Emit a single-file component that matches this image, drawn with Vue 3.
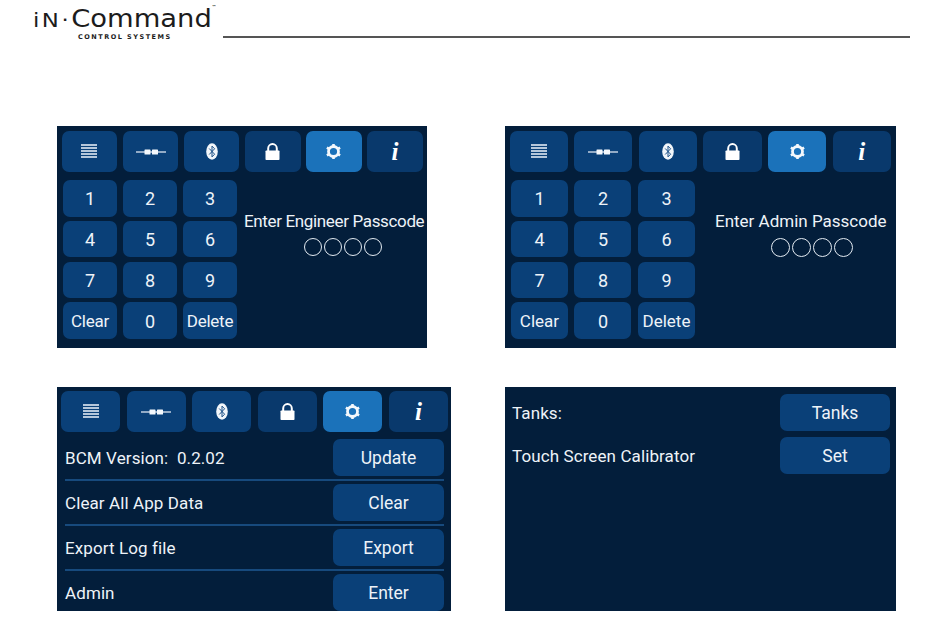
<template>
  <div class="page">
    <header class="top">
      <div class="logo">
        <div class="logo-name"><span class="logo-in">iN·</span>Command<sup class="tm">™</sup></div>
        <div class="logo-sub">CONTROL SYSTEMS</div>
      </div>
      <div class="top-line"></div>
    </header>

    <main class="sheet">
      <section v-for="p in panels" :key="p.id" class="panel" :class="p.id">
        <div v-if="p.tabs" class="tabs">
          <div v-for="t in tabs" :key="t" class="tab" :class="{ active: t === 'gear', dim: t === 'lock' || t === 'info' }">
            <svg v-if="t === 'list'" width="16" height="15" viewBox="0 0 16 15">
              <path d="M0 1h16M0 4h16M0 7h16M0 10h16M0 13h16" stroke="#eef4fa" stroke-width="1.4" fill="none" />
            </svg>
            <svg v-if="t === 'link'" width="30" height="8" viewBox="0 0 30 8">
              <path d="M0 4h30" stroke="#eef4fa" stroke-width="1.2" />
              <rect x="8.5" y="1.5" width="6" height="5" rx="0.6" fill="#f4f8fc" />
              <rect x="16" y="1.5" width="6" height="5" rx="0.6" fill="#f4f8fc" />
            </svg>
            <svg v-if="t === 'bt'" width="12" height="17" viewBox="0 0 12 17">
              <ellipse cx="6" cy="8.5" rx="5.8" ry="8.3" fill="#f2f6fa" />
              <path d="M3.2 5.5l5.4 5.7-2.6 2.7V3.1l2.6 2.7-5.4 5.7" stroke="#1a4f86" stroke-width="1" fill="none" />
            </svg>
            <svg v-if="t === 'lock'" width="15" height="17" viewBox="0 0 15 17">
              <path d="M3.2 8V5.4a4.3 4.3 0 0 1 8.6 0V8" stroke="#fff" stroke-width="2" fill="none" />
              <rect x="0.5" y="7.5" width="14" height="9.5" rx="0.8" fill="#fff" />
            </svg>
            <svg v-if="t === 'gear'" width="17" height="17" viewBox="0 0 17 17">
              <circle cx="8.5" cy="8.5" r="5" stroke="#f4f8fc" stroke-width="2.8" fill="none" />
              <path d="M8.5 0.9v2M8.5 14.1v2M1.9 4.7l1.8 1M13.3 11.3l1.8 1M1.9 12.3l1.8-1M13.3 5.7l1.8-1" stroke="#f4f8fc" stroke-width="2.6" />
            </svg>
            <span v-if="t === 'info'" class="info">i</span>
          </div>
        </div>

        <div v-if="p.title" class="entry">
          <div class="keys">
            <div v-for="k in keys" :key="k" class="btn" :class="{ word: k.length > 1 }">{{ k }}</div>
          </div>
          <div class="msg">
            <div class="msg-title">{{ p.title }}</div>
            <div class="dots">
              <span v-for="n in 4" :key="n" class="dot"></span>
            </div>
          </div>
        </div>

        <div v-if="p.rows" class="rows">
          <div v-for="r in p.rows" :key="r.label" class="row">
            <span class="label">{{ r.label }}</span>
            <div class="btn">{{ r.action }}</div>
          </div>
        </div>
      </section>
    </main>
  </div>
</template>

<script setup>
const tabs = ['list', 'link', 'bt', 'lock', 'gear', 'info']
const keys = ['1', '2', '3', '4', '5', '6', '7', '8', '9', 'Clear', '0', 'Delete']

const panels = [
  { id: 'engineer', tabs: true, title: 'Enter Engineer Passcode' },
  { id: 'admin', tabs: true, title: 'Enter Admin Passcode' },
  {
    id: 'system',
    tabs: true,
    rows: [
      { label: 'BCM Version:\u00a0\u00a00.2.02', action: 'Update' },
      { label: 'Clear All App Data', action: 'Clear' },
      { label: 'Export Log file', action: 'Export' },
      { label: 'Admin', action: 'Enter' },
    ],
  },
  {
    id: 'tanks',
    rows: [
      { label: 'Tanks:', action: 'Tanks' },
      { label: 'Touch Screen Calibrator', action: 'Set' },
    ],
  },
]
</script>

<style>
html,
body {
  background: #fff;
}
</style>

<style scoped>
.page {
  width: 950px;
  height: 640px;
  overflow: hidden;
  font-family: Roboto, "Liberation Sans", sans-serif;
}

.top {
  display: flex;
  align-items: flex-start;
  height: 126px;
  padding-left: 33px;
  box-sizing: border-box;
}

.logo {
  width: 190px;
  padding-top: 6px;
  color: #1c1c1c;
}

.logo-name {
  font-family: "DejaVu Sans", sans-serif;
  font-size: 24px;
  line-height: 27px;
  white-space: nowrap;
  transform: scaleX(1.14);
  transform-origin: left;
}

.logo-in {
  font-size: 20px;
  letter-spacing: 2.2px;
}

.tm {
  font-size: 4px;
  line-height: 0;
  vertical-align: 19px;
  font-weight: 700;
}

.logo-sub {
  margin: 0 0 0 45px;
  font-family: "DejaVu Sans", sans-serif;
  font-weight: 700;
  font-size: 6.5px;
  line-height: 7px;
  letter-spacing: 1.5px;
  white-space: nowrap;
}

.top-line {
  width: 687px;
  height: 2px;
  margin: 36px 0 0 0;
  background: #555;
}

.sheet {
  display: grid;
  grid-template-columns: 448px 391px;
  grid-template-rows: 222px 224px;
  row-gap: 39px;
  padding-left: 57px;
}

.panel {
  background: #031e3b;
  color: #eef3f8;
  overflow: hidden;
  box-sizing: border-box;
}

.engineer {
  width: 370px;
  padding: 5px 4.2px 0 4.6px;
}

.admin {
  padding: 5px 5.2px 0 4.6px;
}

.system {
  width: 394px;
  padding: 4px 3px 0 4px;
}

.tabs {
  display: grid;
  grid-template-columns: repeat(6, 1fr);
  column-gap: 5.5px;
  height: 41px;
}

.admin .tabs {
  column-gap: 6.5px;
}

.system .tabs {
  column-gap: 6.4px;
}

.tab {
  display: flex;
  align-items: center;
  justify-content: center;
  border-radius: 7px;
  background: #0a4078;
}

.tab.dim {
  background: #09396c;
}

.tab.active {
  background: #1b72ba;
}

.info {
  font-family: "Liberation Serif", serif;
  font-weight: 700;
  font-style: italic;
  font-size: 25px;
  line-height: 26px;
  color: #fff;
}

.entry {
  display: flex;
  margin-top: 8px;
}

.keys {
  display: grid;
  grid-template-columns: repeat(3, 54px);
  grid-auto-rows: 36.5px;
  gap: 4.3px 6px;
  margin-left: 1.4px;
}

.admin .keys {
  grid-template-columns: repeat(3, 57px);
  column-gap: 6.5px;
}

.btn {
  display: flex;
  align-items: center;
  justify-content: center;
  padding-top: 1px;
  box-sizing: border-box;
  border-radius: 7px;
  background: #0a4078;
  font-size: 17.5px;
}

.keys .btn {
  font-size: 18px;
}

.keys .btn.word {
  font-size: 17px;
}

.engineer .btn.word {
  letter-spacing: -0.25px;
}

.msg {
  padding-top: 32px;
  margin-left: 7px;
  white-space: nowrap;
}

.admin .msg {
  margin-left: 20px;
}

.msg-title {
  font-size: 17px;
  line-height: 19px;
}

.engineer .msg-title {
  letter-spacing: -0.35px;
}

.dots {
  display: flex;
  gap: 1.6px;
  margin: 7px 0 0 60px;
}

.admin .dots {
  margin-left: 56px;
}

.dot {
  width: 18.4px;
  height: 18.4px;
  box-sizing: border-box;
  border: 1.4px solid #e4ebf2;
  border-radius: 50%;
}

.admin .dot {
  width: 19.4px;
  height: 19.4px;
}

.rows {
  display: flex;
  flex-direction: column;
}

.row {
  display: flex;
  align-items: flex-start;
  justify-content: space-between;
  height: 37px;
  padding-bottom: 3px;
  margin-bottom: 3px;
  box-sizing: content-box;
  border-bottom: 2px solid #174a7d;
}

.row .btn {
  height: 37px;
}

.label {
  font-size: 17px;
  line-height: 39px;
  letter-spacing: 0.1px;
}

.system .rows {
  margin: 7px 4px 0 4px;
}

.system .row:last-child {
  border-bottom: 0;
}

.system .btn {
  width: 111px;
}

.tanks .rows {
  padding: 7px 6px 0 7px;
}

.tanks .row {
  height: 37px;
  padding: 0;
  margin: 0 0 6px 0;
  border: 0;
}

.tanks .btn {
  width: 110px;
}
</style>
